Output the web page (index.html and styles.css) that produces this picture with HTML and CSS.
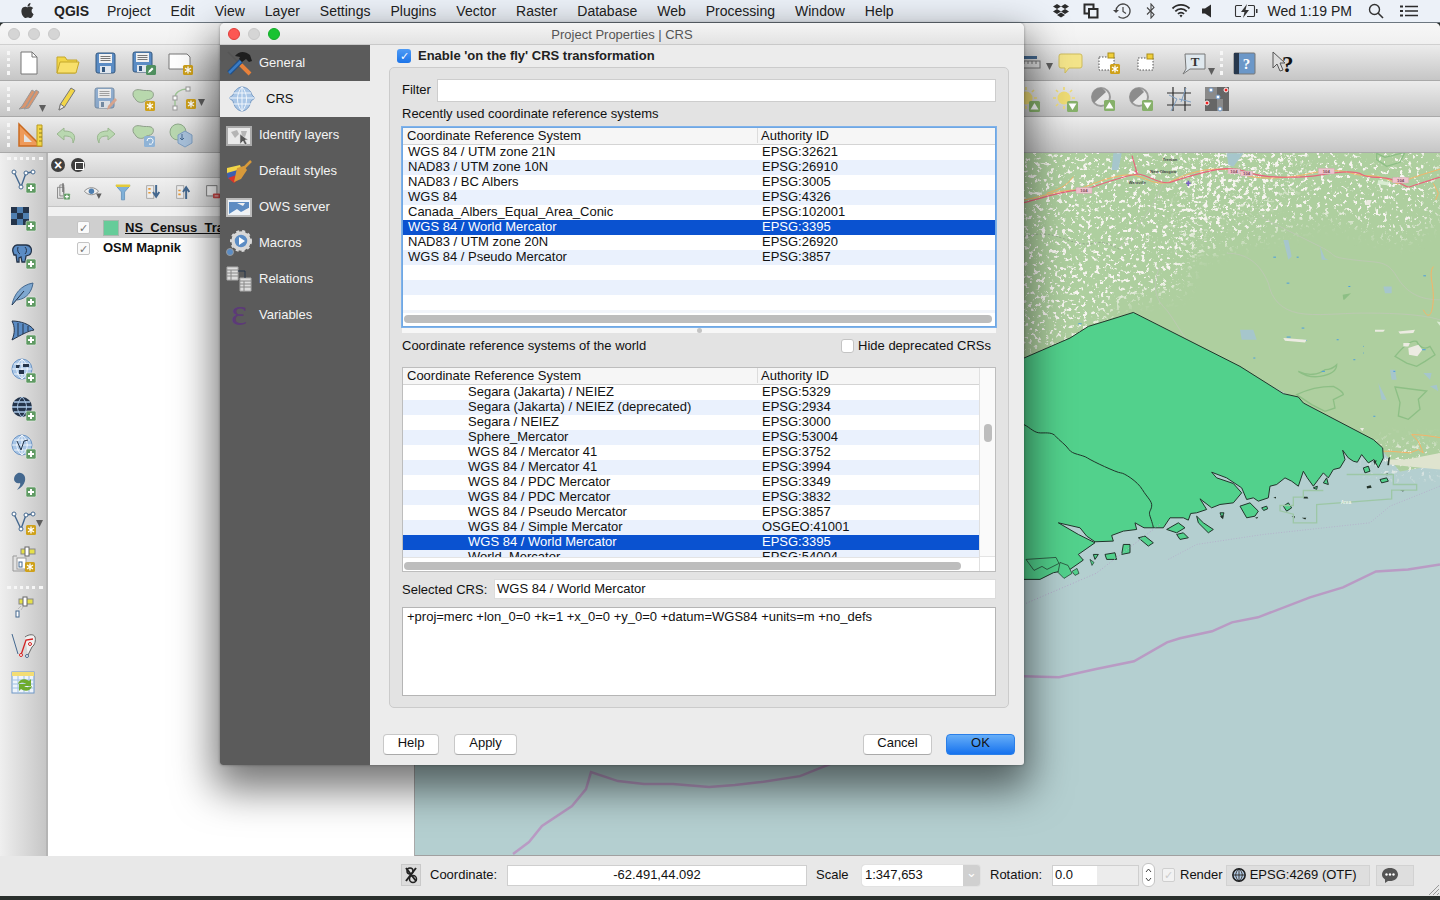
FILE: index.html
```html
<!DOCTYPE html>
<html lang="en">
<head>
  <meta charset="UTF-8"/>
  <title>QGIS | Project Properties | CRS</title>
  <link rel="stylesheet" href="styles.css">
</head>
<body>
  <!-- shared badges and glyphs -->
  <svg class="defs" aria-hidden="true">
    <defs>
      <g id="plus"><rect width="10" height="10" rx="1.5" fill="#5f9a63" stroke="#e8f0e8" stroke-width=".6"/><path d="M5 2v6M2 5h6" stroke="#fff" stroke-width="2"/></g>
      <g id="star"><rect width="10" height="10" rx="1.5" fill="#cfa11a"/><path d="M5 1.5v7M2 3l6 4M8 3L2 7" stroke="#fff" stroke-width="1.3"/></g>
      <g id="pen"><rect width="10" height="10" rx="1.5" fill="#4f8f5f"/><path d="M2 8l1-2.500 3-3 1.500 1.500-3 3z" fill="#fff"/></g>
      <g id="floppy"><rect x="5" y="4" width="19" height="20" rx="2" fill="#5b8cc4" stroke="#34587f"/><rect x="8" y="5" width="13" height="9" fill="#f1f1f1"/><path d="M9.500 7.500h10M9.500 9.500h10M9.500 11.500h10" stroke="#777"/><rect x="9" y="17" width="11" height="7" fill="#dfe6ee"/><rect x="11" y="18" width="3" height="5" fill="#34587f"/></g>
      <g id="blob"><path d="M4 9c0-4 4-5 8-4s7 0 10 1 3 5 1 7-5 1-7 3-7 2-9-1-3-3-3-6z" fill="#b8d8ad" stroke="#8f9f8a"/></g>
      <g id="line-v"><path d="M5 6l7 15 5-14 7-1" fill="none" stroke="#44688f" stroke-width="1.400"/><circle cx="5" cy="6" r="2" fill="#fff" stroke="#44688f"/><circle cx="12" cy="21" r="2" fill="#fff" stroke="#44688f"/><circle cx="17" cy="7" r="2" fill="#fff" stroke="#44688f"/><circle cx="24" cy="6" r="2" fill="#fff" stroke="#44688f"/></g>
      <g id="globe"><circle cx="13" cy="13" r="10" fill="#a9c6e6" stroke="#6f97c6"/><path d="M3 13h20M5 8h16M5 18h16M13 3v20M13 3c-7 6-7 14 0 20M13 3c7 6 7 14 0 20" fill="none" stroke="#fff" stroke-width=".8"/></g>
      <g id="sun"><circle cx="13" cy="13" r="6.500" fill="#efdc74"/><path d="M13 2v3M13 21v3M2 13h3M21 13h3M5 5l2 2M19 19l2 2M21 5l-2 2M5 21l2-2" stroke="#efdc74" stroke-width="1.600"/></g>
      <g id="disc"><circle cx="12" cy="12" r="9" fill="#e6e6e6" stroke="#9a9a9a" stroke-width="2"/><path d="M12 3a9 9 0 0 0-7 15l12-11a9 9 0 0 0-5-4z" fill="#8c8c8c"/></g>
      <g id="up"><rect width="11" height="11" rx="1.500" fill="#86b06a"/><path d="M5.500 2l4 6.500h-8z" fill="#fff"/></g>
      <g id="down"><rect width="11" height="11" rx="1.500" fill="#86b06a"/><path d="M5.500 9l4-6.500h-8z" fill="#fff"/></g>
      <g id="arrow"><path d="M0 0h7l-3.500 7z" fill="#5e5e5e"/></g>
    </defs>
  </svg>

  <header class="menubar">
    <svg class="apple" viewBox="0 0 24 24"><path d="M12.152 6.896c-.948 0-2.415-1.078-3.96-1.04-2.04.027-3.91 1.183-4.961 3.014-2.117 3.675-.546 9.103 1.519 12.09 1.013 1.454 2.208 3.09 3.792 3.039 1.52-.065 2.09-.987 3.935-.987 1.831 0 2.35.987 3.96.948 1.637-.026 2.676-1.48 3.676-2.948 1.156-1.688 1.636-3.325 1.662-3.415-.039-.013-3.182-1.221-3.22-4.857-.026-3.04 2.48-4.494 2.597-4.559-1.429-2.09-3.623-2.324-4.39-2.376-2-.156-3.675 1.09-4.61 1.09zM15.53 3.83c.843-1.012 1.4-2.427 1.245-3.83-1.207.052-2.662.805-3.532 1.818-.78.896-1.454 2.338-1.273 3.714 1.338.104 2.715-.688 3.559-1.701"/></svg>
    <nav class="menu">
      <b>QGIS</b><span>Project</span><span>Edit</span><span>View</span><span>Layer</span><span>Settings</span><span>Plugins</span><span>Vector</span><span>Raster</span><span>Database</span><span>Web</span><span>Processing</span><span>Window</span><span>Help</span>
    </nav>
    <div class="tray">
      <svg width="18" height="16" viewBox="0 0 18 16"><path d="M5 1l4 2.500L5 6 1 3.500zM13 1l4 2.500L13 6 9 3.500zM5 6l4 2.500L5 11 1 8.500zM13 6l4 2.500L13 11 9 8.500zM5 12l4-2.500 4 2.500-4 2.500z" fill="#2b2b2b"/></svg>
      <svg width="16" height="16" viewBox="0 0 16 16"><rect x="1.500" y="1.500" width="9" height="9" fill="none" stroke="#2b2b2b" stroke-width="2"/><rect x="6" y="6" width="8.500" height="8.500" fill="#ecf1f8" stroke="#2b2b2b" stroke-width="2"/></svg>
      <svg width="20" height="16" viewBox="0 0 20 16"><path d="M4 8a7 7 0 1 1 2.500 5.400" fill="none" stroke="#444" stroke-width="1.300"/><path d="M1 7l3 3 3-3z" fill="#444"/><path d="M11 4v4.500l3 2" fill="none" stroke="#444" stroke-width="1.200"/></svg>
      <svg class="tray-bt" width="10" height="16" viewBox="0 0 10 16"><path d="M1 4.500l7 7L5 15V1l3 3.500-7 7" fill="none" stroke="#444" stroke-width="1.100"/></svg>
      <svg class="tray-wifi" width="20" height="16" viewBox="0 0 20 16"><path d="M1.500 5.500a12 12 0 0 1 17 0M4.300 8.300a8 8 0 0 1 11.400 0M7 11a4 4 0 0 1 6 0" fill="none" stroke="#2b2b2b" stroke-width="1.800"/><path d="M8.500 12.500a2 2 0 0 1 3 0L10 14.500z" fill="#2b2b2b"/></svg>
      <svg class="tray-vol" width="10" height="14" viewBox="0 0 10 14"><path d="M0 4.500h3L9 .5v13l-6-4H0z" fill="#2b2b2b"/></svg>
      <svg class="tray-batt" width="24" height="14" viewBox="0 0 24 14"><path d="M8 1.500H2.500a1 1 0 0 0-1 1v9a1 1 0 0 0 1 1H7M14 1.500h5.500a1 1 0 0 1 1 1v9a1 1 0 0 1-1 1H13" fill="none" stroke="#333" stroke-width="1.100"/><path d="M13 0L7 8h3.500L9 14l6-8h-3.500z" fill="#333"/><rect x="22" y="5" width="1.500" height="4" fill="#333"/></svg>
      <span class="clock">Wed 1:19 PM</span>
      <svg class="tray-search" width="16" height="16" viewBox="0 0 16 16"><circle cx="6.500" cy="6.500" r="5" fill="none" stroke="#333" stroke-width="1.400"/><path d="M10 10l5 5" stroke="#333" stroke-width="1.600"/></svg>
      <svg class="tray-list" width="18" height="12" viewBox="0 0 18 12"><path d="M5 1.500h13M5 6h13M5 10.500h13" stroke="#2b2b2b" stroke-width="1.600"/><path d="M0 1.500h3M0 6h3M0 10.500h3" stroke="#2b2b2b" stroke-width="1.800"/></svg>
    </div>
  </header>

  <div class="qgis">
    <div class="titlebar">
      <i class="light"></i><i class="light"></i><i class="light"></i>
    </div>

    <div class="toolbar">
      <i class="grip"></i>
      <div class="slot"><svg class="ico" viewBox="0 0 28 28"><path d="M6 3h11l5 5v17H6z" fill="#fff" stroke="#777"/><path d="M17 3v5h5" fill="none" stroke="#777"/></svg></div>
      <div class="slot"><svg class="ico" viewBox="0 0 28 28"><path d="M4 8h8l2 3h10l-2 13H4z" fill="#f2d648" stroke="#c4a72a"/><path d="M7 13h19l-3 11H4z" fill="#f8e06a" stroke="#c4a72a"/></svg></div>
      <div class="slot"><svg class="ico" viewBox="0 0 28 28"><use href="#floppy"/></svg></div>
      <div class="slot"><svg class="ico" viewBox="0 0 28 28"><use href="#floppy" x="-1" y="-1"/><use href="#pen" x="17" y="16"/></svg></div>
      <div class="slot"><svg class="ico" viewBox="0 0 28 28"><path d="M2 5h18l3 3v12H2z" fill="#fff" stroke="#777"/><use href="#star" x="16" y="16"/></svg></div>
      <div class="right right-a">
        <div class="slot"><svg class="ico" viewBox="0 0 28 28"><path d="M2 7h16v3H2z" fill="#44688f"/><rect x="1" y="12" width="20" height="7" fill="#ddd" stroke="#777"/><path d="M5 12v3M9 12v3M13 12v3M17 12v3" stroke="#777"/></svg><svg class="drop" width="7" height="7"><use href="#arrow"/></svg></div>
        <div class="slot"><svg class="ico" viewBox="0 0 28 28"><path d="M4 5h19a2 2 0 0 1 2 2v10a2 2 0 0 1-2 2H12l-4 5v-5H4a2 2 0 0 1-2-2V7a2 2 0 0 1 2-2z" fill="#f3e48a" stroke="#cdbb5c"/></svg></div>
        <div class="slot"><svg class="ico" viewBox="0 0 28 28"><rect x="4" y="8" width="15" height="13" fill="#fff" stroke="#555" stroke-dasharray="1.500 1.500"/><rect x="13" y="4" width="6" height="5" fill="#f0cf3a" stroke="#a98d1a"/><use href="#star" x="15" y="15"/></svg></div>
        <div class="slot"><svg class="ico" viewBox="0 0 28 28"><rect x="5" y="9" width="15" height="12" fill="#fff" stroke="#555" stroke-dasharray="1.500 1.500"/><rect x="14" y="5" width="6" height="5" fill="#f0cf3a" stroke="#a98d1a"/></svg></div>
        <div class="slot slot-wide"><svg class="ico" viewBox="0 0 28 28"><path d="M6 5h20v15H11l-7 5 3-5z" fill="#dfe8ee" stroke="#777"/><text x="16" y="17" class="ico-t">T</text></svg><svg class="drop" width="7" height="7"><use href="#arrow"/></svg></div>
        <i class="grip"></i>
        <div class="slot slot-help"><svg class="ico" viewBox="0 0 28 28"><rect x="4" y="4" width="21" height="21" rx="1" fill="#6b97c8" stroke="#777"/><rect x="4" y="4" width="5" height="21" fill="#27384d"/><text x="16.500" y="20" class="ico-q">?</text></svg></div>
        <div class="slot"><svg class="ico" viewBox="0 0 28 28"><path d="M5 3l0 16 4-4 3 7 3-1-3-7h5z" fill="#ddd" stroke="#555"/><text x="14" y="23" class="ico-qk">?</text></svg></div>
      </div>
    </div>

    <div class="toolbar">
      <i class="grip"></i>
      <div class="slot"><svg class="ico" viewBox="0 0 28 28"><path d="M4 24l3-3 10-16 3 2-10 16zM9 24l3-3 9-16 3 2-10 16z" fill="#d9956e" stroke="#999"/></svg><svg class="drop drop-sm" width="7" height="7"><use href="#arrow"/></svg></div>
      <div class="slot"><svg class="ico" viewBox="0 0 28 28"><path d="M6 25l1.500-6L18 3l4 2.500L11.500 22z" fill="#f2d648" stroke="#777"/><path d="M6 25l1.500-6 4 3z" fill="#eee" stroke="#777"/></svg></div>
      <div class="slot"><svg class="ico" viewBox="0 0 28 28" opacity=".6"><use href="#floppy" x="-1" y="-1"/><path d="M16 25l1-4 7-8 2 2-7 8z" fill="#d9845e"/></svg></div>
      <div class="slot"><svg class="ico" viewBox="0 0 28 28"><use href="#blob"/><use href="#star" x="16" y="16"/></svg></div>
      <div class="slot slot-node"><svg class="ico" viewBox="0 0 28 28"><path d="M4 23V12c0-4 5-8 12-8" fill="none" stroke="#9fc596" stroke-width="1.400"/><rect x="2" y="21" width="4" height="4" fill="#fff" stroke="#999"/><rect x="2" y="11" width="4" height="4" fill="#fff" stroke="#999"/><rect x="15" y="2" width="4" height="4" fill="#fff" stroke="#999"/><use href="#star" x="15" y="14"/></svg><svg class="drop" width="7" height="7"><use href="#arrow"/></svg></div>
      <div class="right right-b">
        <div class="slot"><svg class="ico" viewBox="0 0 28 28"><use href="#sun"/><use href="#up" x="16" y="16"/></svg></div>
        <div class="slot"><svg class="ico" viewBox="0 0 28 28"><use href="#sun"/><use href="#down" x="16" y="16"/></svg></div>
        <div class="slot"><svg class="ico" viewBox="0 0 28 28"><use href="#disc"/><use href="#up" x="15" y="15"/></svg></div>
        <div class="slot"><svg class="ico" viewBox="0 0 28 28"><use href="#disc"/><use href="#down" x="15" y="15"/></svg></div>
        <div class="slot"><svg class="ico" viewBox="0 0 28 28"><path d="M2 8h24M2 20h24M8 2v24M20 2v24" stroke="#2e2e2e" stroke-width="1.200"/><path d="M6 26L12 14l-8-4M14 14l12 3M21 3l-5 14" fill="none" stroke="#7f9fc2"/></svg></div>
        <div class="slot"><svg class="ico" viewBox="0 0 28 28"><rect x="2" y="2" width="24" height="24" fill="#666"/><rect x="2" y="2" width="12" height="12" fill="#8a8a8a"/><rect x="14" y="14" width="6" height="12" fill="#8a8a8a"/><circle cx="8" cy="5" r="2" fill="#fff" stroke="#6f97c6"/><circle cx="23" cy="5" r="2" fill="#e22" stroke="#fff"/><circle cx="15" cy="12" r="2" fill="#fff" stroke="#6f97c6"/><circle cx="4" cy="18" r="2" fill="#e22" stroke="#fff"/><circle cx="17" cy="24" r="2" fill="#fff" stroke="#6f97c6"/></svg></div>
      </div>
    </div>

    <div class="toolbar">
      <i class="grip"></i>
      <div class="slot"><svg class="ico" viewBox="0 0 28 28"><path d="M4 3v22h22z" fill="#ee9a5a" stroke="#c96a20" stroke-width="1.500"/><path d="M9 13v8h8z" fill="#e3e3e3"/><path d="M22 4h5v21h-5z" fill="#f2d648" stroke="#b89a20"/><path d="M24 8h3M24 12h3M24 16h3M24 20h3" stroke="#8a7a20"/></svg></div>
      <div class="slot"><svg class="ico" viewBox="0 0 28 28"><path d="M11 7L4 13l7 6v-4c6 0 9 1 9 7 4-8 0-12-9-12z" fill="#b9d8b0" stroke="#9ab78f"/></svg></div>
      <div class="slot"><svg class="ico" viewBox="0 0 28 28"><path d="M17 7l7 6-7 6v-4c-6 0-9 1-9 7-4-8 0-12 9-12z" fill="#b9d8b0" stroke="#9ab78f"/></svg></div>
      <div class="slot"><svg class="ico" viewBox="0 0 28 28"><use href="#blob"/><rect x="15" y="15" width="11" height="11" rx="1.500" fill="#8fb3d6"/><path d="M18 20a3 3 0 1 1 2 3" fill="none" stroke="#fff"/></svg></div>
      <div class="slot"><svg class="ico" viewBox="0 0 28 28"><circle cx="11" cy="11" r="8" fill="#b9d8b0" stroke="#8fa98a"/><path d="M18 10l7 4v8l-7 4-7-4v-8z" fill="#a9c2dc" stroke="#7f9fc2"/><path d="M15 13v6m-2-2l2 2 2-2" fill="none" stroke="#44688f"/></svg></div>
    </div>

    <div class="workspace">
      <aside class="strip">
        <i class="grip-h"></i>
        <div class="strip-slot"><svg class="ico" viewBox="0 0 28 28"><use href="#line-v"/><use href="#plus" x="17" y="17"/></svg></div>
        <div class="strip-slot"><svg class="ico" viewBox="0 0 28 28"><path d="M2 3h6v6H2zM14 3h6v6h-6zM8 9h6v6H8zM2 15h6v6H2zM14 15h6v6h-6z" fill="#24344a"/><path d="M8 3h6v6H8zM2 9h6v6H2zM14 9h6v6h-6zM8 15h6v6H8z" fill="#4f7fb0"/><use href="#plus" x="17" y="17"/></svg></div>
        <div class="strip-slot"><svg class="ico" viewBox="0 0 28 28"><path d="M8 3h9c2 0 4 1 5 3 1 3 0 6-2 7l-3 1-1 6h-3l-1-5-2 1 0 4H8l-1-7-2 0-1-3c-1-3 1-7 4-7z" fill="#5b8cc4" stroke="#24344a" stroke-width="1.300"/><path d="M9 5c-1 3 0 6 2 7M16 5c2 2 2 5 0 7" fill="none" stroke="#24344a"/><use href="#plus" x="17" y="17"/></svg></div>
        <div class="strip-slot"><svg class="ico" viewBox="0 0 28 28"><path d="M3 25C5 14 12 5 24 3c-1 8-6 16-16 17" fill="#7fa8d0" stroke="#44688f"/><path d="M3 25l12-14" stroke="#24344a"/><use href="#plus" x="17" y="17"/></svg></div>
        <div class="strip-slot"><svg class="ico" viewBox="0 0 28 28"><path d="M3 3c8 0 18 3 22 9-6 1-13 5-22 10 3-7 3-13 0-19z" fill="#5b8cc4" stroke="#24344a"/><path d="M9 5v13M14 6v10M19 8v5" stroke="#24344a"/><use href="#plus" x="17" y="17"/></svg></div>
        <div class="strip-slot"><svg class="ico" viewBox="0 0 28 28"><use href="#globe"/><path d="M7 9h4l-1 3H7zM14 8h6v3h-6zM10 14h5v4h-5z" fill="#24344a"/><use href="#plus" x="17" y="17"/></svg></div>
        <div class="strip-slot"><svg class="ico" viewBox="0 0 28 28"><circle cx="13" cy="13" r="10" fill="#24344a"/><path d="M3 13h20M5 8h16M5 18h16" stroke="#a9c6e6" stroke-width="1.300"/><path d="M13 3c-6 6-6 14 0 20M13 3c6 6 6 14 0 20" fill="none" stroke="#a9c6e6"/><use href="#plus" x="17" y="17"/></svg></div>
        <div class="strip-slot"><svg class="ico" viewBox="0 0 28 28"><use href="#globe"/><path d="M8 9l4 9 3-9 4-1" fill="none" stroke="#24344a"/><use href="#plus" x="17" y="17"/></svg></div>
        <div class="strip-slot"><svg class="ico" viewBox="0 0 28 28"><path d="M9 3c5-1 8 3 7 8-1 4-4 7-8 9 2-3 4-5 3-7-3 1-6-1-6-4 0-3 2-5 4-6z" fill="#44688f"/><use href="#plus" x="17" y="17"/></svg></div>
        <div class="strip-slot slot-more"><svg class="ico" viewBox="0 0 28 28"><use href="#line-v"/><use href="#star" x="17" y="17"/></svg><svg class="drop" width="7" height="7"><use href="#arrow"/></svg></div>
        <div class="strip-slot"><svg class="ico" viewBox="0 0 28 28"><path d="M8 10H4v15h12v-4" fill="none" stroke="#999"/><rect x="8" y="12" width="9" height="11" fill="#fff" stroke="#999"/><rect x="12" y="3" width="14" height="5" fill="#e6e04a" stroke="#888"/><rect x="16" y="1" width="4" height="9" fill="#fff" stroke="#666"/><rect x="10" y="16" width="3" height="5" fill="#fff" stroke="#44688f"/><use href="#star" x="16" y="16"/></svg></div>
        <i class="grip-h grip-h-mid"></i>
        <div class="strip-slot"><svg class="ico" viewBox="0 0 28 28"><rect x="10" y="6" width="14" height="5" fill="#e6e04a" stroke="#888"/><rect x="14" y="4" width="4" height="9" fill="#fff" stroke="#666"/><rect x="7" y="18" width="3" height="6" fill="#fff" stroke="#44688f"/><path d="M9 16l3-3M12 17l2-3" stroke="#bbb"/></svg></div>
        <div class="strip-slot"><svg class="ico" viewBox="0 0 28 28"><path d="M16 6c4-3 9-3 10 0s0 8-3 10l-4 8" fill="#f1f1f1" stroke="#666"/><path d="M3 3l6 20" stroke="#44688f"/><path d="M12 24l5-15 7-1" fill="none" stroke="#d32222" stroke-width="1.300"/><circle cx="12" cy="24" r="1.500" fill="#fff" stroke="#d32222"/><circle cx="21" cy="13" r="1.500" fill="#fff" stroke="#d32222"/><circle cx="18" cy="25" r="1.500" fill="#fff" stroke="#44688f"/></svg></div>
        <div class="strip-slot"><svg class="ico" viewBox="0 0 28 28"><rect x="3" y="3" width="22" height="21" fill="#eef4fb" stroke="#6f97c6"/><rect x="3" y="3" width="22" height="4" fill="#f3dd74"/><path d="M3 11h22M3 15h22M3 19h22M9 7v17M15 7v17M20 7v17" stroke="#9fc0e2"/><path d="M9 15c1-5 7-6 11-3l2-2v7h-7l2-2c-3-2-5-1-8 0zM23 17c-1 5-7 6-11 3l-2 2v-7h7l-2 2c3 2 5 1 8 0z" fill="#6eab2e"/></svg></div>
      </aside>

      <section class="layers">
        <div class="layers-head">
          <i class="dock-btn">&#215;</i><i class="dock-btn dock-restore"></i>
        </div>
        <div class="layers-tools">
          <div class="tool-slot"><svg class="ico" viewBox="0 0 28 28"><path d="M7 8h8v14H7zM10 5h5v14h-5z" fill="none" stroke="#777"/><path d="M14 3v11" stroke="#777" stroke-width="2"/><use href="#plus" x="15" y="16" transform="translate(3 3) scale(.8)"/></svg></div>
          <div class="tool-slot"><svg class="ico" viewBox="0 0 28 28"><path d="M3 13c5-6 13-6 18 0-5 6-13 6-18 0z" fill="#eee" stroke="#777"/><circle cx="12" cy="13" r="3.500" fill="#4f7fb0"/><use href="#arrow" transform="translate(18 16)"/></svg></div>
          <div class="tool-slot"><svg class="ico" viewBox="0 0 28 28"><path d="M5 6h18l-7 8v10h-4V14z" fill="#7fb0d8" stroke="#5f8fb8"/><path d="M5 6h18" stroke="#e3cb3a" stroke-width="3"/></svg></div>
          <div class="tool-slot"><svg class="ico" viewBox="0 0 28 28"><rect x="6" y="6" width="9" height="16" fill="#eee" stroke="#999"/><path d="M18 5v13m-4-4l4 6 4-6" fill="none" stroke="#44688f" stroke-width="2.500"/><path d="M8 10h3M8 15h3" stroke="#e59a3a" stroke-width="2"/></svg></div>
          <div class="tool-slot"><svg class="ico" viewBox="0 0 28 28"><rect x="6" y="6" width="9" height="16" fill="#eee" stroke="#999"/><path d="M18 23V10m-4 4l4-6 4 6" fill="none" stroke="#44688f" stroke-width="2.500"/><path d="M8 12h3M8 17h3" stroke="#e59a3a" stroke-width="2"/></svg></div>
          <div class="tool-slot"><svg class="ico" viewBox="0 0 28 28"><rect x="6" y="6" width="13" height="13" fill="#fff" stroke="#666"/><rect x="14" y="16" width="9" height="6" rx="1" fill="#d34a4a"/><path d="M16 19h5" stroke="#fff"/></svg></div>
        </div>
        <div class="layers-gap"></div>
        <div class="layer-row layer-row-on">
          <i class="check">&#10003;</i><i class="swatch"></i><span class="layer-name layer-name-u">NS_Census_Tracts</span>
        </div>
        <div class="layer-row">
          <i class="check">&#10003;</i><span class="layer-name">OSM Mapnik</span>
        </div>
      </section>

      <main class="map">
        <svg class="map-svg" viewBox="415 153 1025 703" preserveAspectRatio="none">
          <defs>
            <filter id="speck" x="0" y="0" width="100%" height="100%">
              <feTurbulence type="fractalNoise" baseFrequency=".24" numOctaves="3" seed="11"/>
              <feColorMatrix values="0 0 0 0 .93  0 0 0 0 .91  0 0 0 0 .87  10 0 0 0 -5.800"/>
            </filter>
            <filter id="speck-thin" x="0" y="0" width="100%" height="100%">
              <feTurbulence type="fractalNoise" baseFrequency=".24" numOctaves="3" seed="4"/>
              <feColorMatrix values="0 0 0 0 .93  0 0 0 0 .91  0 0 0 0 .87  10 0 0 0 -5.950"/>
            </filter>
            <filter id="soft"><feGaussianBlur stdDeviation="9"/></filter>
            <mask id="urban">
              <path filter="url(#soft)" fill="#fff" d="M960 140H1300V185L1260 205 1200 225 1180 290 1120 300 1090 340 960 370z"/>
            </mask>
            <mask id="urban-thin">
              <path filter="url(#soft)" fill="#fff" d="M1180 140H1440V215L1400 240 1330 215 1240 240 1180 260zM1370 445h70v30h-70z"/>
            </mask>
          </defs>
          <rect x="415" y="153" width="1025" height="703" fill="#b4cfd0"/>
          <path d="M415 153H1440V465L1400 472 1383 452 1373 440 1133 313 1024 358H415z" fill="#aecf9f"/>
          <rect x="960" y="153" width="480" height="330" filter="url(#speck)" mask="url(#urban)"/>
          <rect x="960" y="153" width="480" height="330" filter="url(#speck-thin)" mask="url(#urban-thin)"/>

          <g transform="translate(1020 140) scale(.33333)" fill="none">
            <!-- grey tracks and parks on land -->
            <g stroke="#bcc9b2" stroke-width="3">
              <path d="M620 340c60 0 100 30 125 90 10 50 40 80 90 90s130 0 190 0 170 0 235 20"/>
              <path d="M420 380c-20 40-20 90 10 120s50 80 80 110M720 230c60 30 120 60 180 90s20 30 100 40 100 0 130 50 70 70 130 70"/>
              <path d="M430 130c-20 50-50 90-70 120s-30 50-60 70"/>
            </g>
            <path d="M12 290c40-10 70-10 100 0s80 30 110 20 60 10 80 20" stroke="#8d9a88" stroke-width="2" stroke-dasharray="7 5"/>
            <g stroke="#8dbf85" stroke-width="4">
              <path d="M1125 650c25-30 50-50 65-45 10 20 25 25 40 15l15 25-30 20-25 15-30-10z"/>
              <path d="M835 695c30 15 60 10 80-5 20 0 30-10 35-15 0 20-20 30-50 35s-50-5-65-15z"/>
              <path d="M1125 742l95 12-25 25 5 30-35 30-30-10 5-40z"/>
              <path d="M1070 40l25 12 60-15-15 30-40 12-30-20z"/>
              <path d="M830 765c40-20 80-25 110-25 20 10 30 20 30 25l-30 15 5 25-30 10-40-20z"/>
            </g>
            <path d="M970 480l-2-15 25-5-20 20z" fill="#8dbf85"/>
            <path d="M1075 120l35 8-8 8-30-3zM1250 545l30 5-20 8z" fill="#d9ecd2"/>
            <!-- lakes -->
            <g fill="#a6c6cc">
              <path d="M280 40l25 0-10 50-20 0zM620 40h50l-30 40-15-5zM790 300l15 0 10 50-10 10zM1090 440l25 0 0 20-20 0zM660 570l40 0 10 30-45 0zM900 320l15 35 10 5-20 0zM1110 690l15 0 5 30-15 0zM1210 700l25 0-5 20zM1230 740l20-5 5 20zM1075 730l25 50-15 0z"/>
            </g>
            <g stroke="#4a9ee0" stroke-width="3">
              <path d="M760 352h8M830 352h6M800 430h8M1030 620h2M845 565h8M800 592h12M820 600h8M850 602h10M700 655h6M905 695h10M1205 630h12M1210 408h8M1120 695h6M1000 660h6M985 440h6M175 552h10M950 600h6M1060 830h6M1030 640h2"/>
            </g>
            <!-- white clearings in the east -->
            <g fill="#ecebe2">
              <path d="M1165 625l30-10 12 15-15 20-25-5zM790 595l70 5-5 8-60-5zM1065 570l30 0-5 6-25 0zM1135 575l50-5-5 10-40 2zM1040 180l15 0-5 15-15 0zM1150 610l20 0-5 10-15 0zM1020 865l12 0-5 10z"/>
            </g>
            <!-- main highway -->
            <path d="M12 180c60-10 100-30 160-30 50-20 120-50 170-45 50 15 60 30 105 22 40-20 90-40 150-40s60 20 110 25 100 0 130-5 60-15 105-15 60 15 100 15 60 10 90 25c30-15 80-30 130-45" stroke="#f5b468" stroke-width="3"/>
            <path d="M12 188c60-14 120-38 180-38 60-20 110-40 160-48 40 5 60 30 95 26 50-15 110-38 170-42s60 20 130 24 110 3 160-6 100-12 120 0 60 5 90 15 40 25 50 22 110-35 145-45" stroke="#e8647c" stroke-width="3.500"/>
            <path d="M352 102l-16-55M352 100l-8-8" stroke="#e8647c" stroke-width="3.500"/>
            <path d="M160 110c-20 30-50 40-80 50M1240 130l15 30-8 20M1240 380c-15 20 0 50 0 90s-10 80-30 40" stroke="#f5b468" stroke-width="3"/>
            <g class="shield">
              <rect x="168" y="143" width="48" height="17"/><rect x="895" y="85" width="48" height="17"/><rect x="1118" y="112" width="48" height="17"/><rect x="624" y="87" width="36" height="14"/><rect x="662" y="94" width="36" height="14"/>
            </g>
            <g class="shield-t">
              <text x="192" y="156">104</text><text x="919" y="98">104</text><text x="1142" y="125">104</text><text x="642" y="99">104</text><text x="680" y="106">104</text>
            </g>
            <g class="town"><text x="430" y="98">New Glasgow</text><text x="352" y="132">Westville</text><text x="450" y="62">Trenton</text></g>
            <path d="M505 122v16M498 130h14" stroke="#7a5fc4" stroke-width="5"/>
            <!-- beach edge along the coast -->
            <path d="M1090 935l20 0 60 5 25-10 15 10-15-35-20-20c30 0 60 5 90 10" stroke="#f5b468" stroke-width="3"/>
            <path d="M1100 960l60 0 100-20v50l-50-5-100-10z" fill="#dfe4cf"/>

            <!-- census polygons -->
            <path class="tract" d="M-50 690L12 655 150 595 205 560 270 540 340 518 660 680 790 762 835 772 850 790 1060 900 1088 925 1090 955 1075 985 1062 960 1045 970 1025 945 1012 968 1000 965 985 955 968 932 975 960 960 985 940 990 925 1015 910 1000 895 1020 880 1040 862 1015 850 995 835 1040 815 1025 795 1015 770 1035 750 1040 745 1075 715 1085 700 1075 680 1080 665 1045 620 1015 575 998 590 1015 640 1032 665 1060 640 1090 600 1095 575 1105 540 1078 560 1110 530 1120 512 1122 505 1142 490 1135 450 1135 430 1165 400 1165 372 1165 345 1150 350 1170 310 1175 275 1188 280 1205 225 1207 200 1190 180 1165 115 1150 175 1185 225 1210 175 1245 190 1262 150 1290 100 1300 60 1320 -50 1320z"/>
            <path d="M12 855c20 10 30 25 50 25s35-2 45 10 30 25 40 40 40 15 55 25 90 45 100 45 50 25 65 50 30 35 28 50-10 15-5 30 10 30 10 35" stroke="#20342a" stroke-width="3"/>
            <g class="tract">
              <path d="M660 1100l30-10 25 25-10 15-25 5zM440 1170l35-20 20 15-25 15zM470 1185l20-5 15 15-25 5zM530 1130l20 20 30 20-15 10-30-30zM355 1195l20-5 25 20-15 10zM310 1215l20 0 0 25-25 5zM255 1245l30-5 5 20-30 0zM220 1245l15 0-10 15zM1080 1020l20-5 5 10-20 5zM1030 985l15-5 5 15-15 5zM910 1030l10-15 5 20zM790 1100l15-10 10 15-15 10zM880 1045l12-5-2 10zM725 1105l15-5 3 8-12 5zM600 1120l12 0-6 15z"/>
            </g>
            <g fill="#24342a">
              <path d="M850 1072l12 0 3 5-14 0zM1040 1040l12-3 3 8-14 2zM600 1130l12-3-3 12zM815 1130l10 0-2 6zM845 1135l14 0-3 5zM1140 1052l14 0-5 4zM1105 955l5-3-3 25-5 0zM1060 965l10-3-5 15zM1090 1005l14-4-2 6zM760 1075l8-3 0 5zM705 1135l10-3-4 6z"/>
            </g>
            <!-- marine park and sea limit -->
            <path d="M980 1005h140v30h70v17h-75v26l-225 17v55h-70v-26l-40-10v-16l40 0v-25l30 0v-20l60 0" stroke="#9dc7a6" stroke-width="4"/>
            <g class="park-t"><text x="962" y="1095">Area</text></g>
            <path d="M445 1260l85-45 200-30 320-35 60-50 150-60" stroke="#b3a5c8" stroke-width="2" stroke-dasharray="3 5"/>
          </g>

          <!-- islands and dashed limit that carry on under the tract layer -->
          <path d="M1026 560l30-2 3 6-12 6-5-3-8 4zM1060 563l8 3 4 8-8 5-6-6zM1072 572l5-3 2 5-4 2zM1090 560l4 3-2 3z" fill="#52d18c" stroke="#20342a" stroke-width=".7"/>
          <path d="M1026 604l70-30 65-50" fill="none" stroke="#b3a5c8" stroke-dasharray="1 2"/>
          <!-- purple boundary at sea -->
          <path d="M1024 677l35 1 36-8 39-8 33-19 13-4 32-7 20-9 26-5 52-20 33-10 33-16 32-2 32-5" fill="none" stroke="#b99bc4" stroke-width="2.500"/>
          <path d="M830 765l-30 12-39 6-26 3-26 2-36-3-29 0-26-3-27-9-5 17-14 17-30 20-13 16-16 12" fill="none" stroke="#b99bc4" stroke-width="2.500"/>
        </svg>
      </main>
    </div>

    <footer class="statusbar">
      <div class="st-icon"><svg width="16" height="18" viewBox="0 0 16 18"><path d="M3 2l10 13M13 2L3 15" stroke="#222" stroke-width="2"/><circle cx="7" cy="5" r="3" fill="none" stroke="#222" stroke-width="1.500"/><circle cx="10" cy="13" r="3.500" fill="none" stroke="#222" stroke-width="1.500"/></svg></div>
      <span class="st-coord-l st-text">Coordinate:</span>
      <span class="st-field st-coord">-62.491,44.092</span>
      <span class="st-scale-l st-text">Scale</span>
      <div class="st-combo"><span>1:347,653</span><i class="st-combo-btn">&#8964;</i></div>
      <span class="st-rot-l st-text">Rotation:</span>
      <div class="st-spin"><span>0.0</span><i></i></div>
      <div class="st-step"><svg width="7" height="16" viewBox="0 0 7 16"><path d="M1 5l2.500-3L6 5M1 11l2.500 3L6 11" fill="none" stroke="#444"/></svg></div>
      <i class="st-check">&#10003;</i>
      <span class="st-text">Render</span>
      <div class="st-crs"><svg width="16" height="16" viewBox="0 0 26 26"><use href="#globe"/><circle cx="13" cy="13" r="10" fill="none" stroke="#222" stroke-width="2.500"/><path d="M3 13h20M13 3v20M13 3c-7 6-7 14 0 20M13 3c7 6 7 14 0 20" fill="none" stroke="#222" stroke-width="1.500"/></svg><span class="st-text">EPSG:4269 (OTF)</span></div>
      <div class="st-msg"><svg width="18" height="16" viewBox="0 0 18 16"><path d="M9 1c4.500 0 8 2.700 8 6.500S13.500 14 9 14H7l-3 2 0-3.500C2 11 1 9.500 1 7.500 1 3.700 4.500 1 9 1z" fill="#555"/><circle cx="5.500" cy="7.500" r="1.200" fill="#fff"/><circle cx="9" cy="7.500" r="1.200" fill="#fff"/><circle cx="12.500" cy="7.500" r="1.200" fill="#fff"/></svg></div>
      <svg class="st-grip" width="12" height="12" viewBox="0 0 12 12"><path d="M11 1L1 11M11 5l-6 6M11 9l-2 2" stroke="#999"/></svg>
    </footer>
  </div>
  <div class="desktop-edge"></div>

  <!-- Project Properties dialog -->
  <div class="dialog">
    <div class="dlg-title">
      <i class="light light-red"></i><i class="light"></i><i class="light light-green"></i>
      <span class="dlg-name">Project Properties | CRS</span>
    </div>
    <div class="dlg-body">
      <nav class="side">
        <a class="side-item"><svg class="ico" viewBox="0 0 28 28"><path d="M3 3l12 12" stroke="#555" stroke-width="1.600"/><path d="M14 14l11 11" stroke="#e8813a" stroke-width="4"/><path d="M4 24L16 12" stroke="#1f4f88" stroke-width="5"/><path d="M4 24L16 12" stroke="#3a7cc4" stroke-width="2.500"/><path d="M10 7c4-5 10-5 15-1l2 6-3 1-3-3-4 3-3-3 1-2z" fill="#1e1e1e"/></svg>General</a>
        <a class="side-item side-item-on"><svg class="ico ico-crs" viewBox="0 0 28 28"><path d="M14 2c5 0 9 4 10 8l3 3-4 3c-1 6-5 10-9 10s-8-4-9-10L1 13l4-3c1-4 5-8 9-8z" fill="#a9c6e6" stroke="#7a9cc4"/><path d="M1 13h26M5 8h18M5 19h18M14 2v24M14 2c-6 6-6 18 0 24M14 2c6 6 6 18 0 24" fill="none" stroke="#f0f6fc"/></svg>CRS</a>
        <a class="side-item"><svg class="ico" viewBox="0 0 28 28"><path d="M2 6l24 0 0 18-24 0z" fill="#e9e9e9" stroke="#aaa" stroke-width="2"/><path d="M6 11l6-2 2 4-4 4zM16 10l6 0-2 6-3-1z" fill="#b5b5b5"/><path d="M15 13v10l3-3 2 4 2-1-2-4h3z" fill="#555" stroke="#ddd" stroke-width=".6"/></svg>Identify layers</a>
        <a class="side-item"><svg class="ico" viewBox="0 0 28 28"><path d="M2 11l13-3 2 5-15 4z" fill="#f2d648"/><path d="M2 16l14-4 2 5-15 5z" fill="#3d5fb0"/><path d="M3 21l14-5 1 3-9 7z" fill="#d8352c"/><path d="M17 13L26 4" stroke="#d89a3a" stroke-width="2.500"/><path d="M12 11l7-2 3 4-6 9-7 3z" fill="#d89a3a"/></svg>Default styles</a>
        <a class="side-item"><svg class="ico" viewBox="0 0 28 28"><rect x="2" y="6" width="24" height="17" fill="#eef3f8" stroke="#bbb" stroke-width="2"/><path d="M4 9h20v6l-8 4-4-3-8 5z" fill="#5d8cc2"/><path d="M12 10l8 0-2 3zM20 17l4-2v5h-6z" fill="#f1f1f1"/></svg>OWS server</a>
        <a class="side-item"><svg class="ico" viewBox="0 0 28 28"><circle cx="16" cy="12" r="8" fill="#5b8cc4" stroke="#d8d8d8" stroke-width="3.500"/><circle cx="16" cy="12" r="10" fill="none" stroke="#d8d8d8" stroke-width="2" stroke-dasharray="3 3"/><path d="M14 8l6 4-6 4z" fill="#fff"/><circle cx="5" cy="23" r="3.500" fill="#5b8cc4" stroke="#999"/></svg>Macros</a>
        <a class="side-item"><svg class="ico" viewBox="0 0 28 28"><path d="M2 2h11v13H2zM15 13h11v13H15z" fill="#ddd" stroke="#aaa"/><path d="M2 5h11M2 8h11M2 11h11M6 5v10M15 16h11M15 19h11M15 22h11M19 16v10" stroke="#888"/><path d="M13 6h7v7" fill="none" stroke="#24344a"/></svg>Relations</a>
        <a class="side-item"><span class="side-eps">&#949;</span>Variables</a>
      </nav>

      <div class="pane">
        <label class="otf"><i class="blue-check">&#10003;</i>Enable 'on the fly' CRS transformation</label>
        <div class="group">
          <div class="filter-row"><span>Filter</span><div class="input"></div></div>
          <div class="cap cap-recent">Recently used coordinate reference systems</div>

          <div class="list list-recent">
            <div class="head"><span>Coordinate Reference System</span><span>Authority ID</span></div>
            <div class="row"><span>WGS 84 / UTM zone 21N</span><span>EPSG:32621</span></div>
            <div class="row"><span>NAD83 / UTM zone 10N</span><span>EPSG:26910</span></div>
            <div class="row"><span>NAD83 / BC Albers</span><span>EPSG:3005</span></div>
            <div class="row"><span>WGS 84</span><span>EPSG:4326</span></div>
            <div class="row"><span>Canada_Albers_Equal_Area_Conic</span><span>EPSG:102001</span></div>
            <div class="row row-sel"><span>WGS 84 / World Mercator</span><span>EPSG:3395</span></div>
            <div class="row"><span>NAD83 / UTM zone 20N</span><span>EPSG:26920</span></div>
            <div class="row"><span>WGS 84 / Pseudo Mercator</span><span>EPSG:3857</span></div>
            <div class="row"></div><div class="row"></div><div class="row"></div>
            <div class="hscroll"><i class="thumb"></i></div>
          </div>
          <div class="splitter"><i></i></div>

          <div class="world-cap"><span>Coordinate reference systems of the world</span><label class="hide-dep"><i class="box"></i>Hide deprecated CRSs</label></div>

          <div class="list list-world">
            <div class="world-main">
              <div class="head"><span>Coordinate Reference System</span><span>Authority ID</span></div>
              <div class="world-rows">
                <div class="row"><span>Segara (Jakarta) / NEIEZ</span><span>EPSG:5329</span></div>
                <div class="row"><span>Segara (Jakarta) / NEIEZ (deprecated)</span><span>EPSG:2934</span></div>
                <div class="row"><span>Segara / NEIEZ</span><span>EPSG:3000</span></div>
                <div class="row"><span>Sphere_Mercator</span><span>EPSG:53004</span></div>
                <div class="row"><span>WGS 84 / Mercator 41</span><span>EPSG:3752</span></div>
                <div class="row"><span>WGS 84 / Mercator 41</span><span>EPSG:3994</span></div>
                <div class="row"><span>WGS 84 / PDC Mercator</span><span>EPSG:3349</span></div>
                <div class="row"><span>WGS 84 / PDC Mercator</span><span>EPSG:3832</span></div>
                <div class="row"><span>WGS 84 / Pseudo Mercator</span><span>EPSG:3857</span></div>
                <div class="row"><span>WGS 84 / Simple Mercator</span><span>OSGEO:41001</span></div>
                <div class="row row-sel"><span>WGS 84 / World Mercator</span><span>EPSG:3395</span></div>
                <div class="row"><span>World_Mercator</span><span>EPSG:54004</span></div>
              </div>
              <div class="hscroll hscroll-world"><i class="thumb"></i></div>
            </div>
            <div class="vscroll"><i class="vthumb"></i><i class="corner"></i></div>
          </div>

          <div class="selected-row"><span>Selected CRS:</span><div class="input input-sel">WGS 84 / World Mercator</div></div>
          <div class="proj">+proj=merc +lon_0=0 +k=1 +x_0=0 +y_0=0 +datum=WGS84 +units=m +no_defs</div>
        </div>
        <div class="buttons">
          <button class="btn btn-help">Help</button>
          <button class="btn btn-apply">Apply</button>
          <button class="btn btn-cancel">Cancel</button>
          <button class="btn btn-ok">OK</button>
        </div>
      </div>
    </div>
  </div>
</body>
</html>
```

FILE: styles.css
```css
* { box-sizing:border-box; }
html, body { height:100%; }
body {
  margin:0;
  width:1440px;
  height:900px;
  overflow:hidden;
  display:flex;
  flex-direction:column;
  position:relative;
  background:#2a2f2c;
  color:#111;
  font-family:'Liberation Sans',Arial,sans-serif;
  font-size:13px;
}
i { font-style:normal; display:block; }
.defs { position:absolute; width:0; height:0; }
.ico { width:28px; height:28px; display:block; flex:none; }
.ico-t { font:700 13px 'Liberation Serif',serif; fill:#333; text-anchor:middle; }
.ico-q { font:700 15px 'Liberation Serif',serif; fill:#fff; text-anchor:middle; }
.ico-qk { font:700 23px 'Liberation Serif',serif; fill:#111; }

/* mac menu bar */
.menubar {
  height:23px;
  flex:none;
  display:flex;
  align-items:center;
  background:#ecf1f8;
  border-bottom:1px solid #6d7780;
  padding-left:20px;
  color:#222;
  font-size:14px;
}
.apple { width:15px; height:15px; fill:#333; margin-bottom:2px; }
.menu { display:flex; gap:20px; margin-left:19px; }
.menu b { margin-right:-2px; }
.tray { margin-left:auto; display:flex; align-items:center; padding-right:22px; gap:13px; }
.tray-bt { margin-left:1px; }
.tray-wifi { margin-left:2px; }
.tray-vol { margin-left:-2px; }
.tray-batt { margin-left:9px; }
.clock { margin-left:-4px; }
.tray-search { margin-left:3px; }
.tray-list { margin-left:3px; }

/* main qgis window */
.qgis {
  flex:1;
  min-height:0;
  display:flex;
  flex-direction:column;
  background:#e8e8e8;
  border-radius:5px 5px 0 0;
  overflow:hidden;
}
.desktop-edge { height:4px; flex:none; background:#2a2f2c; }
.titlebar {
  height:22px;
  flex:none;
  display:flex;
  align-items:center;
  gap:8px;
  padding-left:8px;
  background:linear-gradient(#f7f7f7,#f0f0f0);
  border-bottom:1px solid #d0d0d0;
}
.light { width:12px; height:12px; border-radius:50%; background:#d5d5d5; border:1px solid #c8c8c8; }
.light-red { background:#fc5753; border-color:#df3d3a; }
.light-green { background:#19c332; border-color:#12ac28; }

.toolbar {
  height:36px;
  flex:none;
  display:flex;
  align-items:center;
  padding-left:7px;
  background:linear-gradient(#ececec,#c6c6c6);
  border-bottom:1px solid #a9a9a9;
}
.grip { width:3px; height:24px; border-left:3px dotted #f6f6f6; flex:none; }
.slot { width:38px; height:32px; flex:none; display:flex; align-items:center; justify-content:center; position:relative; }
.slot-wide { width:54px; }
.slot-help { margin-left:2px; }
.slot-node { margin-left:4px; }
.drop { position:absolute; right:-1px; bottom:9px; }
.drop-sm { right:2px; bottom:3px; }
.slot-wide .drop { right:5px; bottom:4px; }
.right { display:flex; align-items:center; }
.right-a { margin-left:814px; }
.right-b { margin-left:804px; }

.workspace {
  flex:1;
  min-height:0;
  display:grid;
  grid-template-columns:48px 367px 1fr;
}

/* left tool strip */
.strip {
  display:flex;
  flex-direction:column;
  padding-top:4px;
  background:linear-gradient(90deg,#efefef,#c6c6c6);
  border-right:2px solid #b5b5b5;
}
.grip-h { height:4px; width:36px; margin-left:7px; border-top:3px dotted #f6f6f6; flex:none; }
.grip-h-mid { margin-top:7px; margin-bottom:-2px; }
.strip-slot { height:38px; flex:none; display:flex; align-items:center; justify-content:center; position:relative; }
.slot-more .drop { right:3px; top:17px; }

/* layers panel */
.layers { background:#fff; min-width:0; overflow:hidden; border-right:1px solid #a9a9a9; }
.layers-head {
  height:25px;
  display:flex;
  align-items:center;
  gap:6px;
  padding-left:3px;
  background:linear-gradient(#ececec,#d2d2d2);
  border-bottom:1px solid #b8b8b8;
}
.dock-btn {
  width:14px;
  height:14px;
  border-radius:50%;
  background:#3f3f3f;
  color:#fff;
  font-weight:700;
  font-size:14px;
  line-height:14px;
  text-align:center;
}
.dock-restore { position:relative; }
.dock-restore::after {
  content:"";
  position:absolute;
  left:4px;
  top:4px;
  width:7px;
  height:6px;
  border:1.500px solid #fff;
}
.layers-tools {
  height:29px;
  display:flex;
  align-items:center;
  background:linear-gradient(#f0f0f0,#dcdcdc);
  border-bottom:1px solid #c4c4c4;
}
.tool-slot { width:30px; flex:none; display:flex; justify-content:center; }
.tool-slot .ico { width:22px; height:22px; }
.layers-gap { height:10px; background:#f1f1f1; border-bottom:1px solid #cfcfcf; }
.layer-row { height:20px; display:flex; align-items:center; padding-left:29px; background:#fff; }
.layer-row-on { background:#cfcfcf; height:21px; }
.check {
  width:13px;
  height:13px;
  border:1px solid #c4c4c4;
  border-radius:2px;
  background:#fafafa;
  color:#777;
  font-size:11px;
  line-height:12px;
  text-align:center;
  flex:none;
}
.swatch { width:16px; height:16px; margin-left:13px; margin-right:6px; background:#66cc99; border:1px solid #a8b8ae; flex:none; }
.layer-name { font-weight:700; white-space:nowrap; margin-bottom:2px; }
.layer-row:not(.layer-row-on) .layer-name { margin-left:13px; }
.layer-name-u { text-decoration:underline; margin-bottom:0; }

/* map canvas */
.map { min-width:0; overflow:hidden; border-bottom:1px solid #a0a0a0; }
.map-svg { width:100%; height:100%; display:block; }
.tract { fill:#52d18c; stroke:#20342a; stroke-width:3; }
.shield { fill:#eec3cd; stroke:#c9a0ac; stroke-width:1; }
.shield-t { font:700 13px 'Liberation Sans',sans-serif; fill:#7c4a55; text-anchor:middle; stroke:none; }
.town { font:700 12px 'Liberation Sans',sans-serif; fill:#444; stroke:none; text-anchor:middle; }
.park-t { font:700 14px 'Liberation Sans',sans-serif; fill:#f1f6ee; stroke:none; }

/* status bar */
.statusbar { height:40px; flex:none; display:flex; align-items:center; padding-left:401px; padding-bottom:2px; background:#e8e8e8; }
.st-text { margin-bottom:1px; }
.st-icon { width:20px; height:22px; display:flex; align-items:center; justify-content:center; background:#dcdcdc; border:1px solid #c9c9c9; }
.st-coord-l { margin-left:9px; width:77px; }
.st-field { background:#fff; border:1px solid #cfcfcf; height:21px; line-height:18px; }
.st-coord { width:300px; text-align:center; }
.st-scale-l { margin-left:9px; width:46px; }
.st-combo { width:118px; height:21px; display:flex; background:#fff; border-radius:3px; line-height:19px; padding-left:3px; box-shadow:0 0 1px #aaa; }
.st-combo span { flex:1; }
.st-combo-btn { width:17px; background:#d0d0d0; color:#fff; text-align:center; border-radius:0 3px 3px 0; line-height:16px; }
.st-rot-l { margin-left:10px; width:62px; }
.st-spin { width:87px; height:21px; display:flex; background:#fff; border:1px solid #cfcfcf; line-height:17px; padding-left:2px; }
.st-spin span { width:42px; }
.st-spin i { flex:1; background:#ececec; }
.st-step { width:13px; height:24px; margin-left:3px; background:#fff; border:1px solid #c4c4c4; border-radius:6px; display:flex; align-items:center; justify-content:center; }
.st-check { width:13px; height:14px; margin:0 5px 0 7px; background:#f2f2f2; border:1px solid #cfcfcf; border-radius:2px; color:#ccc; font-size:11px; line-height:13px; text-align:center; }
.st-crs { width:144px; height:21px; margin-left:3px; display:flex; align-items:center; gap:3px; padding-left:4px; background:#dedede; border:1px solid #d2d2d2; }
.st-msg { width:38px; height:21px; margin-left:6px; display:flex; align-items:center; padding-left:4px; background:#dedede; border:1px solid #d2d2d2; }
.st-grip { margin-left:auto; align-self:flex-end; margin-bottom:-2px; }

/* project properties dialog */
.dialog {
  position:absolute;
  left:220px;
  top:23px;
  width:804px;
  height:742px;
  display:flex;
  flex-direction:column;
  background:#ececec;
  border-radius:5px 5px 3px 3px;
  box-shadow:0 18px 40px 6px rgba(0,0,0,.55),0 0 3px rgba(0,0,0,.35);
  overflow:hidden;
}
.dlg-title {
  height:22px;
  flex:none;
  display:flex;
  align-items:center;
  gap:8px;
  padding-left:8px;
  position:relative;
  background:linear-gradient(#f5f5f5,#e3e3e3);
  border-bottom:1px solid #c9c9c9;
}
.dlg-name { flex:1; margin-left:-68px; margin-top:2px; text-align:center; color:#555; }
.dlg-body { flex:1; min-height:0; display:flex; }

.side { width:150px; flex:none; background:#5b5b5b; }
.side-item {
  height:36px;
  display:flex;
  align-items:center;
  gap:6px;
  padding-left:5px;
  padding-bottom:2px;
  color:#f4f4f4;
}
.side-item .ico { margin-top:2px; }
.side-item-on { background:#ebebeb; color:#111; gap:10px; padding-left:8px; }
.side-eps { width:28px; height:28px; flex:none; text-align:center; font:400 38px/24px 'Liberation Serif',serif; color:#5c3a78; }

.pane { flex:1; min-width:0; display:flex; flex-direction:column; }
.otf { height:22px; display:flex; align-items:center; gap:7px; padding-left:27px; padding-bottom:2px; font-weight:700; color:#222; }
.blue-check {
  width:14px;
  height:14px;
  margin-top:2px;
  border-radius:3px;
  background:linear-gradient(#4f9bf5,#1c74e8);
  color:#fff;
  font-size:11px;
  line-height:14px;
  text-align:center;
  font-weight:400;
}
.group {
  height:641px;
  margin-left:19px;
  width:620px;
  padding:11px 12px 0 12px;
  background:#e3e3e3;
  border:1px solid #cbcbcb;
  border-radius:5px;
}
.filter-row { display:flex; align-items:center; height:23px; }
.filter-row span { width:35px; margin-bottom:2px; }
.input { flex:1; height:100%; background:#fff; border:1px solid #cdcdcd; }
.cap { height:15px; line-height:15px; margin-top:4px; }

.list { background:#fff; }
.list-recent {
  height:200px;
  margin-top:6px;
  display:flex;
  flex-direction:column;
  border:1px solid #6fa7e3;
  box-shadow:0 0 0 1px #7fb2ea;
}
.head {
  height:17px;
  flex:none;
  display:grid;
  grid-template-columns:354px 1fr;
  line-height:15px;
  background:#f6f6f6;
  border-bottom:1px solid #d4d4d4;
}
.head span { padding-left:4px; white-space:nowrap; height:15px; }
.head span + span { border-left:1px solid #dcdcdc; padding-left:3px; }
.row {
  height:15px;
  flex:none;
  display:grid;
  grid-template-columns:354px 1fr;
  grid-template-rows:15px;
  line-height:14px;
  background:#fff;
  white-space:nowrap;
}
.row span { padding-left:5px; }
.list-recent .row:nth-of-type(even) { background:#fff; }
.list-recent .row:nth-of-type(odd) { background:#eaf1fd; }
.row-sel, .list-recent .row-sel:nth-of-type(odd), .list-recent .row-sel:nth-of-type(even) { background:#0a52d0; color:#fff; }
.hscroll { flex:1; padding:5px 3px 0 1px; background:linear-gradient(#f1f4fa 3px,#fff 3px); }
.thumb { height:8px; border-radius:4px; background:#bdbdbd; }
.splitter { height:5px; margin-top:1px; background:#f7f7f7; display:flex; justify-content:center; align-items:center; }
.splitter i { width:5px; height:5px; border-radius:50%; background:#c4c4c4; }

.world-cap { height:18px; margin-top:3px; display:flex; align-items:center; justify-content:space-between; padding-right:5px; }
.hide-dep { display:flex; align-items:center; gap:4px; }
.box { width:13px; height:14px; margin-top:1px; background:#fff; border:1px solid #c4c4c4; border-radius:3px; }

.list-world { height:205px; margin-top:13px; display:flex; border:1px solid #bdbdbd; }
.world-main { flex:1; min-width:0; display:flex; flex-direction:column; border-right:1px solid #e0e0e0; }
.list-world .head { grid-template-columns:354px 1fr; }
.world-rows { height:172px; flex:none; overflow:hidden; }
.list-world .row:nth-child(even) { background:#eaf1fd; }
.list-world .row:nth-child(odd) { background:#fff; }
.list-world .row.row-sel { background:#0a52d0; }
.list-world .row span:first-child { padding-left:65px; }
.hscroll-world { padding:4px 18px 0 1px; background:#fff; border-top:1px solid #e4e4e4; }
.vscroll { width:15px; flex:none; position:relative; background:#fafafa; }
.vthumb { position:absolute; left:4px; top:56px; width:8px; height:18px; border-radius:4px; background:#bdbdbd; }
.corner { position:absolute; left:0; right:0; bottom:0; height:15px; background:#fff; border-top:1px solid #e4e4e4; }

.selected-row { height:20px; margin-top:7px; display:flex; align-items:center; }
.selected-row span { width:92px; flex:none; }
.input-sel { border-color:#dcdcdc; line-height:18px; padding-left:2px; }
.proj { height:89px; margin-top:8px; padding:1px 4px; line-height:15px; background:#fff; border:1px solid #b5b5b5; }

.buttons { display:flex; padding:26px 9px 0 13px; }
.btn {
  height:21px;
  padding:0 0 4px;
  font:13px 'Liberation Sans',Arial,sans-serif;
  color:#111;
  background:#fff;
  border:1px solid #c8c8c8;
  border-bottom-color:#aaa;
  border-radius:4px;
}
.btn-help { width:56px; }
.btn-apply { width:63px; margin-left:15px; }
.btn-cancel { width:69px; margin-left:auto; }
.btn-ok {
  width:69px;
  margin-left:14px;
  border-color:#2a7fe8;
  background:linear-gradient(#66aef8,#1672ee);
}
```
